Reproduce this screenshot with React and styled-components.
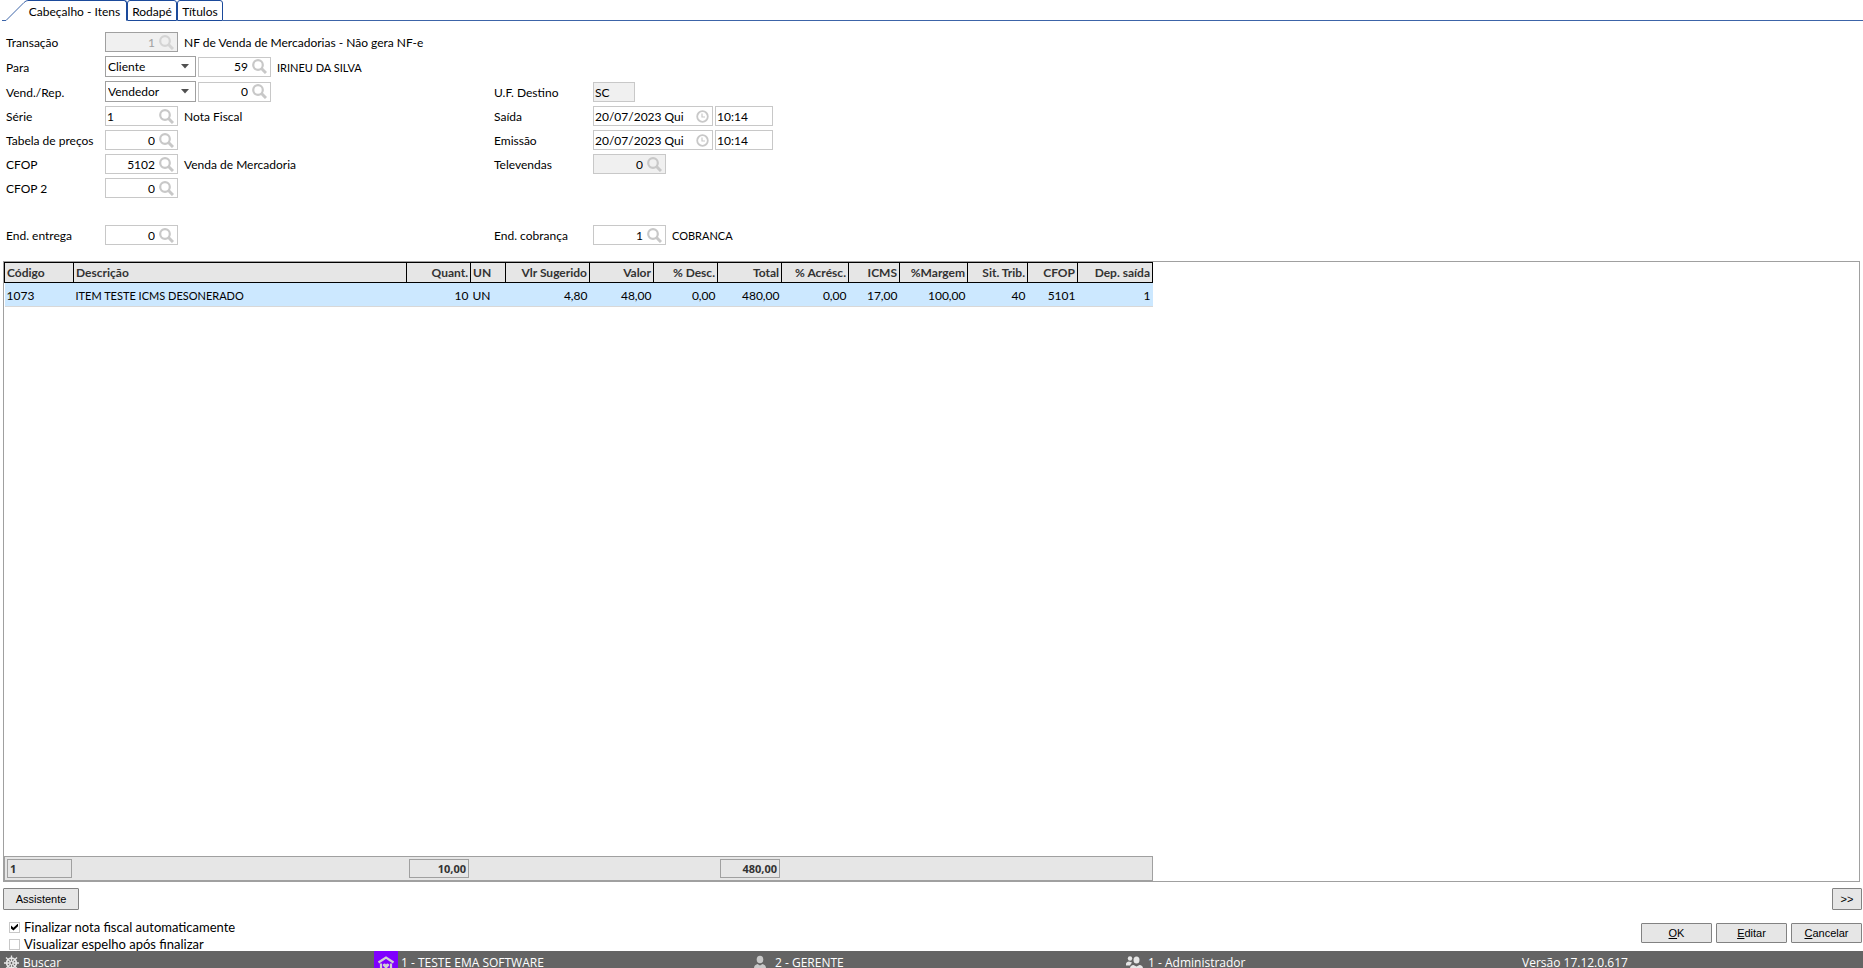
import React from "react";
import styled, { createGlobalStyle } from "styled-components";

const GlobalStyle = createGlobalStyle`
  *, *::before, *::after { box-sizing: border-box; }
  html, body, #root { height: 100%; }
  body { margin: 0; background: #fff; color: #000; overflow: hidden; }
  body, input, select, button, table { font-family: Lato, "Open Sans", sans-serif; font-size: 12px; }
  svg { display: block; flex: none; }
`;

const Page = styled.div`
  display: flex;
  flex-direction: column;
  height: 100vh;
`;

const TabBar = styled.div`
  display: flex;
  height: 21px;
  padding-left: 2px;
`;

const TabSlope = styled.svg`
  width: 26px;
  height: 21px;
`;

const Tab = styled.button`
  height: 21px;
  width: ${(p) => p.$width}px;
  padding: ${(p) => (p.$active ? "3px 5px 0 0" : "3px 0 0")};
  background: #fff;
  border: 1px solid #1b4a9b;
  border-left-width: ${(p) => (p.$active ? 0 : 1)}px;
  border-bottom-color: ${(p) => (p.$active ? "#fff" : "#1b4a9b")};
  border-radius: ${(p) => (p.$active ? "0 3px 0 0" : "3px 3px 0 0")};
  line-height: 14px;
  text-align: center;
  white-space: nowrap;
`;

const TabRule = styled.div`
  flex: 1;
  border-bottom: 1px solid #3c64a8;
`;

const Form = styled.form`
  display: grid;
  grid-template-columns: 488px 1fr;
  padding: 11px 0 16px 6px;
`;

const Column = styled.div`
  display: flex;
  flex-direction: column;
  gap: 4px;
  padding-top: ${(p) => p.$top || 0}px;
`;

const Row = styled.div`
  display: flex;
  align-items: center;
  height: ${(p) => (p.$tall ? 21 : 20)}px;
  margin-top: ${(p) => p.$before || 0}px;
`;

const Label = styled.label`
  width: 99px;
  padding-top: 2px;
  line-height: 16px;
  white-space: nowrap;
`;

const Note = styled.span`
  padding: 2px 0 0 4px;
  font-size: ${(p) => (p.$caps ? 11 : 12)}px;
  line-height: 16px;
  white-space: nowrap;
`;

const Field = styled.span`
  display: flex;
  align-items: center;
  width: ${(p) => p.$width || 73}px;
  height: 20px;
  margin-right: 2px;
  padding-right: ${(p) => (p.$plain ? 0 : 3)}px;
  background: ${(p) => (p.$gray ? "#f0f0f0" : "#fff")};
  border: 1px solid ${(p) => (p.$dim ? "#a0a0a0" : "#c8c8c8")};
`;

const Input = styled.input`
  flex: 1;
  min-width: 0;
  height: 18px;
  padding: 0 4px 0 1px;
  border: 0;
  outline: 0;
  background: transparent;
  color: ${(p) => (p.$dim ? "#a0a0a0" : "#000")};
  text-align: ${(p) => (p.$left ? "left" : "right")};
`;

const SelectBox = styled.span`
  display: flex;
  align-items: center;
  width: 91px;
  height: 21px;
  margin-right: 2px;
  padding-right: 6px;
  border: 1px solid #a0a0a0;
`;

const Select = styled.select`
  flex: 1;
  min-width: 0;
  height: 19px;
  padding: 0 2px;
  border: 0;
  background: transparent;
  appearance: none;
`;

const Grid = styled.section`
  display: flex;
  flex: 1;
  flex-direction: column;
  justify-content: space-between;
  align-items: flex-start;
  min-height: 0;
  margin: 0 3px;
  border: 1px solid #a0a0a0;
`;

const Table = styled.table`
  width: 1148px;
  table-layout: fixed;
  border-collapse: collapse;
`;

const HeadCell = styled.th`
  height: 20px;
  padding: 1px 2px 0;
  border: 1px solid #000;
  background: #e6e6e6;
  color: #333;
  line-height: 16px;
  text-align: ${(p) => (p.$left ? "left" : "right")};
  white-space: nowrap;
`;

const Cell = styled.td`
  height: 24px;
  padding: 1px 2px 0;
  border-bottom: 1px solid #d8d8d8;
  background: #cce8ff;
  font-size: ${(p) => (p.$caps ? 11 : 12)}px;
  text-align: ${(p) => (p.$left ? "left" : "right")};
  white-space: nowrap;
`;

const Totals = styled.div`
  display: grid;
  grid-template-columns: 65px 337px 60px 251px 60px;
  width: 1149px;
  height: 25px;
  padding: 2px 2px 0;
  background: #e6e6e6;
  border: 1px solid #a0a0a0;
`;

const Total = styled.output`
  grid-column: ${(p) => p.$column};
  height: 19px;
  padding: 0 2px;
  border: 1px solid #a0a0a0;
  color: #333;
  font-family: "Open Sans", sans-serif;
  font-size: 11px;
  font-weight: 700;
  line-height: 17px;
  text-align: ${(p) => (p.$left ? "left" : "right")};
`;

const Actions = styled.div`
  display: flex;
  justify-content: space-between;
  padding: 6px 1px 0 3px;
`;

const Button = styled.button`
  width: ${(p) => p.$width}px;
  height: ${(p) => (p.$tall ? 22 : 20)}px;
  padding: 0;
  background: #e6e6e6;
  border: 1px solid #828282;
  border-radius: 1px;
  font-family: "Liberation Sans", Arial, sans-serif;
  font-size: 11px;
`;

const Bottom = styled.div`
  display: flex;
  justify-content: space-between;
  height: 41px;
  padding: 9px 1px 0 9px;
`;

const Checks = styled.div`
  display: flex;
  flex-direction: column;
  gap: 1px;
`;

const Check = styled.label`
  display: flex;
  align-items: center;
  gap: 4px;
  height: 16px;
  font-size: 13px;
  white-space: nowrap;
`;

const Box = styled.input`
  width: 11px;
  height: 11px;
  margin: 0;
  appearance: none;
  background: #fff;
  border: 1px solid #c8c8c8;

  &:checked::after {
    content: "";
    display: block;
    width: 7px;
    height: 7px;
    margin: 1px;
    background: #000;
    clip-path: polygon(0 30%, 35% 60%, 100% 0, 100% 40%, 35% 100%, 0 70%);
  }
`;

const Buttons = styled.div`
  display: flex;
  gap: 4px;
  padding-top: 4px;
`;

const StatusBar = styled.footer`
  display: grid;
  grid-template-columns: 371fr 379fr 373fr 396fr 341fr;
  height: 17px;
  padding-left: 3px;
  overflow: hidden;
  background: #646464;
  color: #fff;
  font-family: "Open Sans", sans-serif;
`;

const StatusItem = styled.div`
  display: flex;
  gap: ${(p) => p.$gap}px;
  line-height: 23px;
  white-space: nowrap;
`;

const IconDrop = styled.span`
  padding-top: 4px;
`;

const Search = ({ dim }) => (
  <svg width="15" height="15" viewBox="0 0 15 15" fill="none" stroke={dim ? "#d4d4d4" : "#c8c8c8"} strokeWidth="2.200">
    <circle cx="6" cy="6" r="4.800" />
    <path d="M9.500 9.500 14 14" strokeWidth="3" />
  </svg>
);

const Clock = () => (
  <svg width="13" height="13" viewBox="0 0 13 13" fill="none" stroke="#c8c8c8">
    <circle cx="6.500" cy="6.500" r="5.300" strokeWidth="1.800" />
    <path d="M6 3.500V7h3" strokeWidth="1.200" />
  </svg>
);

const Arrow = () => (
  <svg width="8" height="5" viewBox="0 0 8 5">
    <path d="M0 0h8L4 4.500z" fill="#505050" />
  </svg>
);

const Wheel = () => (
  <svg width="17" height="17" viewBox="0 0 17 17" fill="none" stroke="#e6e6e6">
    <circle cx="8.500" cy="8" r="4.800" strokeWidth="1.800" />
    <path d="M8.500 .5v15M1 8h15M3 2.500l11 11M14 2.500l-11 11" strokeWidth="1.300" />
    <circle cx="8.500" cy="8" r="1.500" fill="#646464" />
  </svg>
);

const House = () => (
  <svg width="24" height="24" viewBox="0 0 24 24">
    <path d="M0 0h24v24H0z" fill="#8000ff" />
    <path d="M4.500 11.500 12 6.500l7.500 5M7 12.500V21h10v-8.500" fill="none" stroke="#d0d0d0" strokeWidth="2.200" />
    <path d="M12 18 9 14.800a1.600 1.600 0 0 1 3-1.300 1.600 1.600 0 0 1 3 1.300z" fill="#d0d0d0" />
  </svg>
);

const Person = () => (
  <svg width="15" height="17" viewBox="0 0 15 17" fill="#c8c8c8">
    <ellipse cx="7" cy="4.500" rx="3.300" ry="3.800" />
    <path d="M1 17v-4q0-3 3.500-4l2.500 1.500L9.500 9Q13 10 13 13v4z" />
  </svg>
);

const People = () => (
  <svg width="17" height="17" viewBox="0 0 17 17" fill="#e6e6e6">
    <circle cx="4" cy="3.500" r="2.200" />
    <path d="M0 10.500V9q0-2 3-2.500l3 1L4 10.500z" />
    <ellipse cx="10.500" cy="5" rx="3" ry="3.500" />
    <path d="M4 17v-3.500q0-3 3.500-3.500l3 1.500 3-1.500q3.500.5 3.500 3.500V17z" />
  </svg>
);

function Lookup({ id, value, gray, dim, left, label }) {
  return (
    <Field $gray={gray} $dim={dim}>
      <Input id={id} aria-label={label} defaultValue={value} disabled={dim} readOnly={gray} $dim={dim} $left={left} />
      <Search dim={dim} />
    </Field>
  );
}

function Choice({ id, value }) {
  return (
    <SelectBox>
      <Select id={id} defaultValue={value}>
        <option>{value}</option>
      </Select>
      <Arrow />
    </SelectBox>
  );
}

function DateRow({ id, label }) {
  return (
    <Row>
      <Label htmlFor={id}>{label}</Label>
      <Field $width={120}>
        <Input id={id} defaultValue="20/07/2023 Qui" $left />
        <Clock />
      </Field>
      <Field $width={58} $plain>
        <Input aria-label={`${label} hora`} defaultValue="10:14" $left />
      </Field>
    </Row>
  );
}

const columns = [
  { name: "Código", value: "1073", width: 69, left: true },
  { name: "Descrição", value: "ITEM TESTE ICMS DESONERADO", width: 333, left: true, caps: true },
  { name: "Quant.", value: "10", width: 64 },
  { name: "UN", value: "UN", width: 35, left: true },
  { name: "Vlr Sugerido", value: "4,80", width: 84 },
  { name: "Valor", value: "48,00", width: 64 },
  { name: "% Desc.", value: "0,00", width: 64 },
  { name: "Total", value: "480,00", width: 64 },
  { name: "% Acrésc.", value: "0,00", width: 67 },
  { name: "ICMS", value: "17,00", width: 51 },
  { name: "%Margem", value: "100,00", width: 68 },
  { name: "Sit. Trib.", value: "40", width: 60 },
  { name: "CFOP", value: "5101", width: 50 },
  { name: "Dep. saída", value: "1", width: 75 },
];

export default function App() {
  return (
    <Page>
      <GlobalStyle />
      <TabBar>
        <TabSlope viewBox="0 0 26 21" fill="none" stroke="#3c64a8">
          <path d="M0 20.500h4L22 2.500q2-2 4-2" />
        </TabSlope>
        <Tab $active $width={99}>Cabeçalho - Itens</Tab>
        <Tab $width={50}>Rodapé</Tab>
        <Tab $width={46}>Títulos</Tab>
        <TabRule />
      </TabBar>
      <Form>
        <Column>
          <Row>
            <Label htmlFor="transacao">Transação</Label>
            <Lookup id="transacao" value="1" gray dim />
            <Note>NF de Venda de Mercadorias - Não gera NF-e</Note>
          </Row>
          <Row $tall>
            <Label htmlFor="para">Para</Label>
            <Choice id="para" value="Cliente" />
            <Lookup id="cliente" label="Código do cliente" value="59" />
            <Note $caps>IRINEU DA SILVA</Note>
          </Row>
          <Row $tall>
            <Label htmlFor="vend">Vend./Rep.</Label>
            <Choice id="vend" value="Vendedor" />
            <Lookup id="vendedor" label="Código do vendedor" value="0" />
          </Row>
          <Row>
            <Label htmlFor="serie">Série</Label>
            <Lookup id="serie" value="1" left />
            <Note>Nota Fiscal</Note>
          </Row>
          <Row>
            <Label htmlFor="tabela">Tabela de preços</Label>
            <Lookup id="tabela" value="0" />
          </Row>
          <Row>
            <Label htmlFor="cfop">CFOP</Label>
            <Lookup id="cfop" value="5102" />
            <Note>Venda de Mercadoria</Note>
          </Row>
          <Row>
            <Label htmlFor="cfop2">CFOP 2</Label>
            <Lookup id="cfop2" value="0" />
          </Row>
          <Row $before={23}>
            <Label htmlFor="entrega">End. entrega</Label>
            <Lookup id="entrega" value="0" />
          </Row>
        </Column>
        <Column $top={50}>
          <Row>
            <Label htmlFor="uf">U.F. Destino</Label>
            <Field $width={42} $gray $plain>
              <Input id="uf" defaultValue="SC" readOnly $left />
            </Field>
          </Row>
          <DateRow id="saida" label="Saída" />
          <DateRow id="emissao" label="Emissão" />
          <Row>
            <Label htmlFor="tele">Televendas</Label>
            <Lookup id="tele" value="0" gray />
          </Row>
          <Row $before={47}>
            <Label htmlFor="cobranca">End. cobrança</Label>
            <Lookup id="cobranca" value="1" />
            <Note $caps>COBRANCA</Note>
          </Row>
        </Column>
      </Form>
      <Grid>
        <Table>
          <colgroup>
            {columns.map((c) => (
              <col key={c.name} width={c.width} />
            ))}
          </colgroup>
          <thead>
            <tr>
              {columns.map((c) => (
                <HeadCell key={c.name} $left={c.left}>{c.name}</HeadCell>
              ))}
            </tr>
          </thead>
          <tbody>
            <tr>
              {columns.map((c) => (
                <Cell key={c.name} $left={c.left} $caps={c.caps}>{c.value}</Cell>
              ))}
            </tr>
          </tbody>
        </Table>
        <Totals>
          <Total $column={1} $left>1</Total>
          <Total $column={3}>10,00</Total>
          <Total $column={5}>480,00</Total>
        </Totals>
      </Grid>
      <Actions>
        <Button $width={76} $tall>Assistente</Button>
        <Button $width={30} $tall>&gt;&gt;</Button>
      </Actions>
      <Bottom>
        <Checks>
          <Check><Box type="checkbox" defaultChecked />Finalizar nota fiscal automaticamente</Check>
          <Check><Box type="checkbox" />Visualizar espelho após finalizar</Check>
        </Checks>
        <Buttons>
          <Button $width={71}><u>O</u>K</Button>
          <Button $width={71}><u>E</u>ditar</Button>
          <Button $width={71}><u>C</u>ancelar</Button>
        </Buttons>
      </Bottom>
      <StatusBar>
        <StatusItem $gap={3}><IconDrop><Wheel /></IconDrop>Buscar</StatusItem>
        <StatusItem $gap={3}><House />1 - TESTE EMA SOFTWARE</StatusItem>
        <StatusItem $gap={7}><IconDrop><Person /></IconDrop>2 - GERENTE</StatusItem>
        <StatusItem $gap={5}><IconDrop><People /></IconDrop>1 - Administrador</StatusItem>
        <StatusItem>Versão 17.12.0.617</StatusItem>
      </StatusBar>
    </Page>
  );
}
